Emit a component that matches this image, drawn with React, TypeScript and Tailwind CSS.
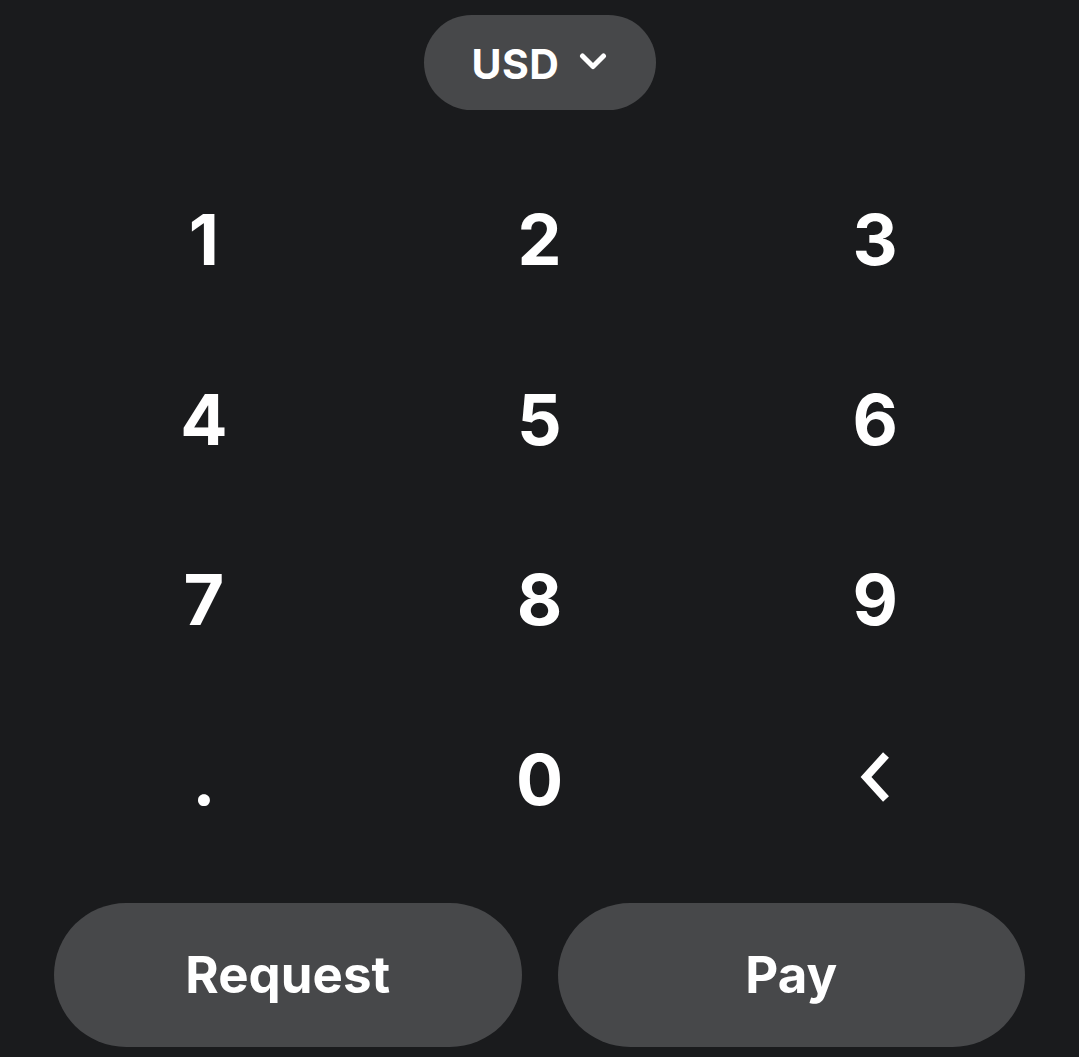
import React from 'react';

const keys = ['1', '2', '3', '4', '5', '6', '7', '8', '9', '.', '0', 'back'];

const App: React.FC = () => {
  return (
    <div
      className="w-full h-[1057px] bg-[#1a1b1d] flex flex-col text-white"
      style={{ fontFamily: 'Inter, "Noto Sans", sans-serif' }}
    >
      {/* Currency picker */}
      <button className="mt-[15px] mx-auto h-[95px] w-[232px] rounded-full bg-[#47484a] flex items-center justify-center gap-[20px]">
        <span className="text-[41px] font-bold leading-none tracking-[0.5px] mt-[4px]">USD</span>
        <svg width="28" height="19" viewBox="0 0 28 19" fill="none" className="mt-[-2px]">
          <polyline points="3.5,4 14,14.5 24.5,4" stroke="white" strokeWidth="5" strokeLinecap="round" strokeLinejoin="round" />
        </svg>
      </button>

      {/* Keypad */}
      <div className="mt-[40px] px-[36px] grid grid-cols-3 grid-rows-4">
        {keys.map(k => (
          <button key={k} className="h-[180px] flex items-center justify-center">
            {k === 'back' ? (
              <svg width="30" height="50" viewBox="0 0 30 50" fill="none" className="mt-[-6px]">
                <polyline points="26,3 6,25 26,47" stroke="white" strokeWidth="8" strokeLinecap="butt" strokeLinejoin="miter" />
              </svg>
            ) : (
              <span className="text-[70px] font-bold leading-none">{k}</span>
            )}
          </button>
        ))}
      </div>

      {/* Actions */}
      <div className="mt-[33px] px-[54px] grid grid-cols-2 gap-[36px]">
        <button className="h-[144px] rounded-full bg-[#47484a] text-[51px] font-bold">Request</button>
        <button className="h-[144px] rounded-full bg-[#47484a] text-[51px] font-bold">Pay</button>
      </div>
    </div>
  );
};

export default App;
